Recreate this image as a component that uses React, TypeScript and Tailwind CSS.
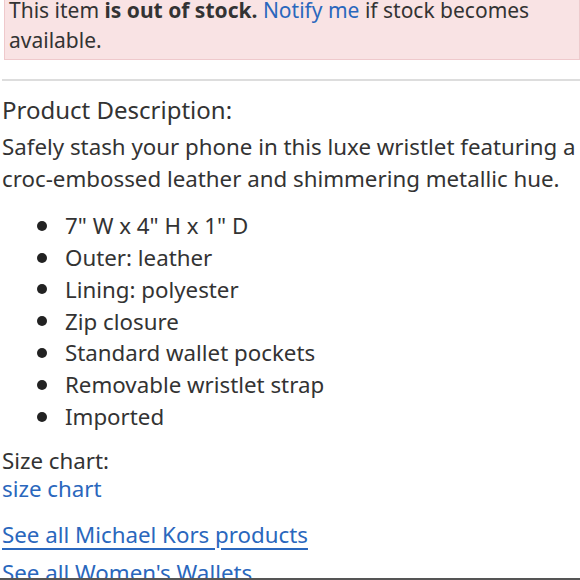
import React from "react";

export default function App() {
  const items = [
    '7" W x 4" H x 1" D',
    "Outer: leather",
    "Lining: polyester",
    "Zip closure",
    "Standard wallet pockets",
    "Removable wristlet strap",
    "Imported",
  ];
  return (
    <div
      className="w-[580px] h-[580px] overflow-hidden bg-white text-[#333333] relative"
      style={{ fontFamily: '"Noto Sans", sans-serif' }}
    >
      <div className="ml-[4px] -mt-[8px] border border-[#efc9cc] bg-[#f9e3e4] pl-[4px] pr-2 pt-[2px] pb-[4px] text-[21px] leading-[30px]">
        This item <b className="font-bold">is out of stock.</b>{" "}
        <span className="text-[#2a67bd]">Notify me</span> if stock becomes available.
      </div>
      <div className="mt-[19px] ml-[2px] h-[2px] bg-[#dddddd]" />
      <div className="pl-[2px] mt-[13px] text-[22.3px]">
        <div className="text-[24px] leading-[32px]">Product Description:</div>
        <p className="leading-[32px] mt-[5px] whitespace-nowrap">
          Safely stash your phone in this luxe wristlet featuring a
          <br />
          croc-embossed leather and shimmering metallic hue.
        </p>
        <ul className="mt-[15px] flex flex-col">
          {items.map((t) => (
            <li key={t} className="flex items-center h-[31.8px]">
              <span className="w-[10px] h-[10px] rounded-full bg-[#222] ml-[35px] mr-[18px]" />
              <span>{t}</span>
            </li>
          ))}
        </ul>
        <div className="mt-[14px] leading-[28px]">Size chart:</div>
        <div className="leading-[28px] text-[#2a67bd]">size chart</div>
        <div className="mt-[17px] leading-[30px] text-[#2a67bd] underline underline-offset-[5px] decoration-[1.5px]">
          See all Michael Kors products
        </div>
        <div className="mt-[8px] leading-[30px] text-[#2a67bd] underline underline-offset-[5px] decoration-[1.5px]">
          See all Women's Wallets
        </div>
      </div>
      <div className="absolute left-0 right-0 bottom-0 h-[2px] bg-[#555]" />
    </div>
  );
}
